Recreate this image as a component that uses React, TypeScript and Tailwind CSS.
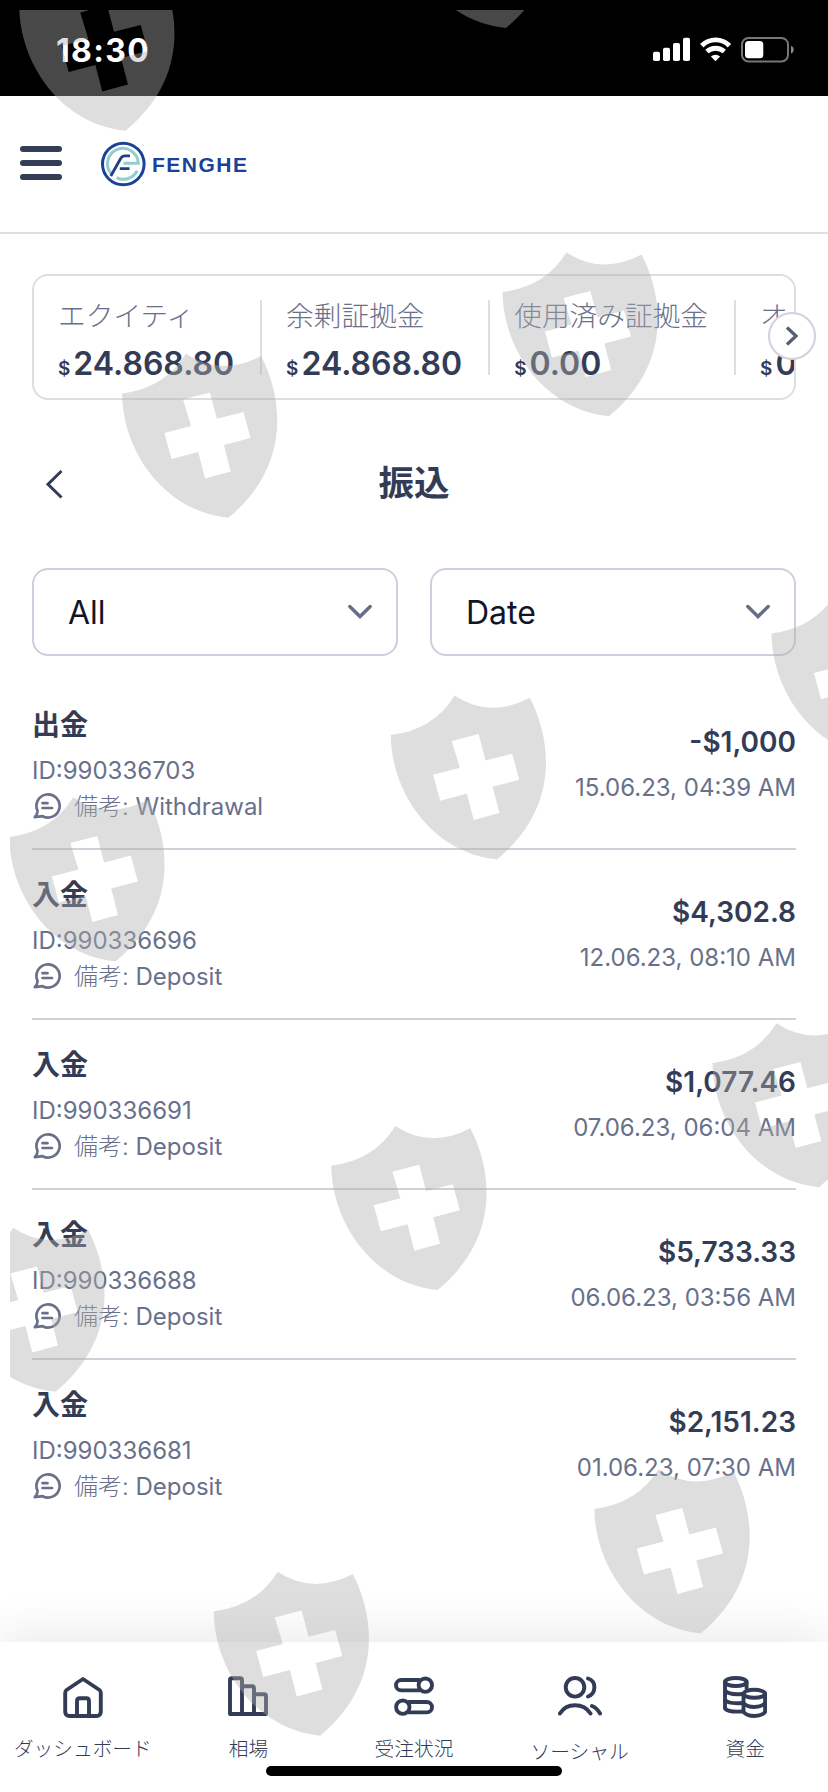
import type { ReactNode } from "react";

interface Transaction {
  id: string;
  title: string;
  note: string;
  amount: string;
  date: string;
}

interface Balance {
  label: string;
  value: string;
}

const balances: Balance[] = [
  { label: "エクイティ", value: "24.868.80" },
  { label: "余剰証拠金", value: "24.868.80" },
  { label: "使用済み証拠金", value: "0.00" },
  { label: "オ", value: "0" },
];

const transactions: Transaction[] = [
  { id: "990336703", title: "出金", note: "Withdrawal", amount: "-$1,000", date: "15.06.23, 04:39 AM" },
  { id: "990336696", title: "入金", note: "Deposit", amount: "$4,302.8", date: "12.06.23, 08:10 AM" },
  { id: "990336691", title: "入金", note: "Deposit", amount: "$1,077.46", date: "07.06.23, 06:04 AM" },
  { id: "990336688", title: "入金", note: "Deposit", amount: "$5,733.33", date: "06.06.23, 03:56 AM" },
  { id: "990336681", title: "入金", note: "Deposit", amount: "$2,151.23", date: "01.06.23, 07:30 AM" },
];

const shields = [
  [104.7, 48],
  [485, -54.8],
  [207.5, 435],
  [588, 333.6],
  [857, 675],
  [476.2, 776.7],
  [94.8, 878.6],
  [798, 1104.5],
  [416.8, 1207.3],
  [34.7, 1309],
  [679.9, 1550.6],
  [299.2, 1653],
];

function StatusBar() {
  return (
    <div className="flex h-24 items-start justify-between bg-black pl-[56px] pr-[34px] pt-[34px] text-white">
      <span className="mt-px text-[32px] font-bold leading-8 tracking-[1.3px]">18:30</span>
      <svg width="142" height="26" viewBox="0 0 142 26" className="mt-[3px]">
        <g fill="#fff">
          <rect x="1" y="14.7" width="7" height="9.3" rx="1.8" />
          <rect x="11" y="10.8" width="7" height="13.2" rx="1.8" />
          <rect x="21" y="6" width="7" height="18" rx="1.8" />
          <rect x="31" y="0.8" width="7" height="23.2" rx="1.8" />
          <path d="M63.5 24.2l-4.6-4.6a6.6 6.6 0 0 1 9.2 0z" />
        </g>
        <g fill="none" stroke="#fff" strokeWidth="4.9">
          <path d="M49.8 8.7a19.3 19.3 0 0 1 27.6 0" />
          <path d="M54.9 14.5a13.4 13.4 0 0 1 17.4 0" />
        </g>
        <rect x="90" y="1" width="46" height="23.4" rx="6.5" fill="none" stroke="#777" strokeWidth="2" />
        <rect x="93" y="4" width="18.3" height="17.2" rx="3.5" fill="#fff" />
        <path d="M139 8.8c3.6 1.2 3.6 6.6 0 7.8z" fill="#8a8a8a" />
      </svg>
    </div>
  );
}

function Header() {
  return (
    <header className="flex h-[138px] items-center border-b-2 border-[#e0e0e0] pl-5">
      <button className="flex w-[42px] -translate-y-[1px] flex-col gap-2">
        <span className="h-1.5 rounded-full bg-[#333d56]" />
        <span className="h-1.5 rounded-full bg-[#333d56]" />
        <span className="h-1.5 rounded-full bg-[#333d56]" />
      </button>
      <div className="ml-[38px] flex items-center gap-1.5">
        <svg width="46" height="46" viewBox="0 0 46 46" fill="none">
          <circle cx="23.3" cy="23" r="20.8" stroke="#1a4298" strokeWidth="3" />
          <g stroke="#93cdd1" strokeWidth="3">
            <path d="M11 32.5A15.4 15.4 0 1 1 38.3 22.2H23.5" />
            <path d="M16.5 36.6A15.4 15.4 0 0 0 37.2 29.8" />
          </g>
          <path d="M10.8 35L20.8 17.2Q22.2 14.9 24.8 14.9H30M19.8 27.6H29.5" stroke="#203f86" strokeWidth="2.8" />
        </svg>
        <span className="mt-0.5 font-['Liberation_Sans',sans-serif] text-[21px] font-bold leading-6 tracking-[1.5px] text-[#1a4298]">
          FENGHE
        </span>
      </div>
    </header>
  );
}

function BalanceBar() {
  return (
    <section className="relative mx-8 mt-10">
      <div className="flex h-[126px] items-center overflow-hidden rounded-2xl border-2 border-[#dedee0]">
        {balances.map((balance) => (
          <div
            key={balance.label}
            className="flex h-[75px] shrink-0 flex-col border-r-2 border-[#dedee0] pl-6 pr-[26px] last:border-r-0 last:pr-0"
          >
            <span className="text-[27.7px] font-light leading-[32px] text-[#68708a]">{balance.label}</span>
            <span className="mt-[14px] flex items-baseline gap-[3px] font-semibold leading-[36px] text-[#333c56]">
              <span className="text-[19px]">$</span>
              <span className="text-[32px]">{balance.value}</span>
            </span>
          </div>
        ))}
      </div>
      <button className="absolute -right-5 top-[38px] flex size-12 items-center justify-center rounded-full border-2 border-[#d3d0df] bg-white">
        <svg width="14" height="20" viewBox="0 0 14 20" fill="none" stroke="#555e73" strokeWidth="3.2">
          <path d="M2 1.5L11 10l-9 8.5" />
        </svg>
      </button>
    </section>
  );
}

function Filter({ label }: { label: string }) {
  return (
    <button className="flex h-[88px] flex-1 items-center justify-between rounded-2xl border-2 border-[#d0cedd] pl-[34px] pr-[23px] text-[32px] text-[#11152a]">
      <span className="mt-0.5">{label}</span>
      <svg width="26" height="16" viewBox="0 0 26 16" fill="none" stroke="#666e85" strokeWidth="3.4" strokeLinecap="round">
        <path d="M2.8 2.5L13 12.5 23.2 2.5" />
      </svg>
    </button>
  );
}

function NoteIcon() {
  return (
    <svg width="29" height="28" viewBox="-1 0 29 28" fill="none" stroke="#68708a" strokeWidth="2.7" strokeLinecap="round" strokeLinejoin="round">
      <path d="M4.6 19A11.6 11.6 0 1 1 9.6 24.2L1.8 25.2Q4.6 22 4.6 19z" />
      <path d="M9.5 11.2h5M9.5 16h9.5" />
    </svg>
  );
}

function TransactionRow({ item }: { item: Transaction }) {
  return (
    <li className="flex h-[170px] items-center justify-between border-b-2 border-[#d0d0da] last:border-transparent">
      <div className="pb-[3px] text-[24px] text-[#68708a]">
        <h3 className="mb-1 text-[28px] font-bold leading-[46px] text-[#333c56]">{item.title}</h3>
        <p className="leading-[37px]">ID:{item.id}</p>
        <p className="flex items-center gap-[13px] font-light leading-[35px]">
          <NoteIcon />
          <span>
            備考: <span className="font-normal">{item.note}</span>
          </span>
        </p>
      </div>
      <div className="pt-0.5 text-right">
        <p className="text-[28px] font-semibold leading-[45px] text-[#333c56]">{item.amount}</p>
        <p className="text-[24px] leading-[45px] text-[#68708a]">{item.date}</p>
      </div>
    </li>
  );
}

function NavIcon({ children, width = 40 }: { children: ReactNode; width?: number }) {
  return (
    <svg
      width={width}
      height="42"
      viewBox={`0 0 ${width} 42`}
      fill="none"
      stroke="#333c56"
      strokeWidth="3.9"
      strokeLinecap="round"
      strokeLinejoin="round"
    >
      {children}
    </svg>
  );
}

function NavItem({ label, icon, low = false }: { label: string; icon: ReactNode; low?: boolean }) {
  return (
    <button className="flex flex-1 flex-col items-center text-[19.7px] font-light leading-[30px] text-[#333c56]">
      {icon}
      <span className={low ? "mt-[19px] whitespace-nowrap" : "mt-4 whitespace-nowrap"}>{label}</span>
    </button>
  );
}

function BottomNav() {
  return (
    <nav className="relative mt-auto flex h-[150px] bg-white pt-[34px] shadow-[0_-14px_40px_rgba(0,0,0,0.07)]">
      <NavItem
        label="ダッシュボード"
        icon={
          <NavIcon>
            <path d="M20 3L3.5 14Q2.2 15 2.2 17V35.5Q2.2 40 6.7 40H33.3Q37.8 40 37.8 35.5V17Q37.8 15 36.5 14z" />
            <path d="M14 39.5V25Q14 22.2 16.8 22.2H23.2Q26 22.2 26 25V39.5" />
          </NavIcon>
        }
      />
      <NavItem
        label="相場"
        icon={
          <NavIcon>
            <path d="M2 38V4Q2 2.2 3.8 2.2H12.2Q14 2.2 14 4V38zM14 10.3H24.2Q26 10.3 26 12.1V38H14M26 18.2H36.2Q38 18.2 38 20V38H26" />
          </NavIcon>
        }
      />
      <NavItem
        label="受注状況"
        icon={
          <NavIcon>
            <path d="M25 4H7.2a5.2 5.2 0 0 0 0 10.4H25" />
            <circle cx="31.3" cy="9.2" r="6.7" />
            <circle cx="8.8" cy="31.2" r="6.7" />
            <path d="M15 26H32.8a5.2 5.2 0 0 1 0 10.4H15" />
          </NavIcon>
        }
      />
      <NavItem
        label="ソーシャル"
        low
        icon={
          <NavIcon width={44}>
            <circle cx="17" cy="11.3" r="9.3" />
            <path d="M30 2.5C38.5 5 38.5 17.5 30 20.5M1.9 37.5C8.5 26.5 25.5 26.5 32.5 37.5M34 30Q39 32 42 37.5" />
          </NavIcon>
        }
      />
      <NavItem
        label="資金"
        icon={
          <NavIcon width={44}>
            <ellipse cx="12.8" cy="6" rx="10.8" ry="4" />
            <path d="M2 6V32.5Q5 36.3 19 35.5M23.6 6V13M2 14.5Q5.5 19 19 18M2 24Q5.5 28 19 27" />
            <ellipse cx="31.3" cy="17.8" rx="10.8" ry="4" />
            <path d="M20.5 17.8V36Q24 40 31.3 40T42.1 36V17.8M20.5 27Q24 31 31.3 31T42.1 27" />
          </NavIcon>
        }
      />
      <div className="absolute bottom-4 left-[266px] h-2.5 w-[296px] rounded-full bg-black" />
    </nav>
  );
}

// Shield watermark laid over the whole screen
function ShieldOverlay() {
  return (
    <svg className="pointer-events-none absolute left-0 top-0" width="828" height="1792" viewBox="0 0 828 1792">
      <defs>
        <clipPath id="shield-area">
          <rect x="10" y="10" width="818" height="1782" />
        </clipPath>
        <path
          id="shield"
          fillRule="evenodd"
          transform="scale(1.0105 1)"
          d="M-84.6-41.6Q-42-47-21.3-81.3Q13.5-58 53-79C74-38 84 30 20.7 82.7C-41 77-84 18-84.6-41.6z
            M-24.2-35.6L2.4-42.6 9.2-16.2 35.6-23 42.6 3 16.2 10 23 36.4-2.4 43.4-9.2 17-35.6 24-42.6-2-16.2-9z"
        />
      </defs>
      <g clipPath="url(#shield-area)" fill="#b0b0b0" fillOpacity="0.41">
        {shields.map(([x, y]) => (
          <use key={`${x}-${y}`} href="#shield" x={x} y={y} />
        ))}
      </g>
    </svg>
  );
}

export default function App() {
  return (
    <div className="relative flex h-[1792px] w-[828px] flex-col overflow-hidden bg-white font-['Inter','Noto_Sans_CJK_JP',sans-serif]">
      <StatusBar />
      <Header />
      <BalanceBar />

      <div className="relative mt-[60px] flex h-12 items-center justify-center">
        <button className="absolute left-11">
          <svg width="20" height="32" viewBox="0 0 20 32" fill="none" stroke="#333c56" strokeWidth="3">
            <path d="M17.5 3L4 16.2 17.5 29.5" />
          </svg>
        </button>
        <h1 className="text-[35.5px] font-bold leading-[48px] text-[#333c56]">振込</h1>
      </div>

      <div className="mx-8 mt-[60px] flex gap-8">
        <Filter label="All" />
        <Filter label="Date" />
      </div>

      <ul className="mx-8 mt-6">
        {transactions.map((item) => (
          <TransactionRow key={item.id} item={item} />
        ))}
      </ul>

      <BottomNav />
      <ShieldOverlay />
    </div>
  );
}
